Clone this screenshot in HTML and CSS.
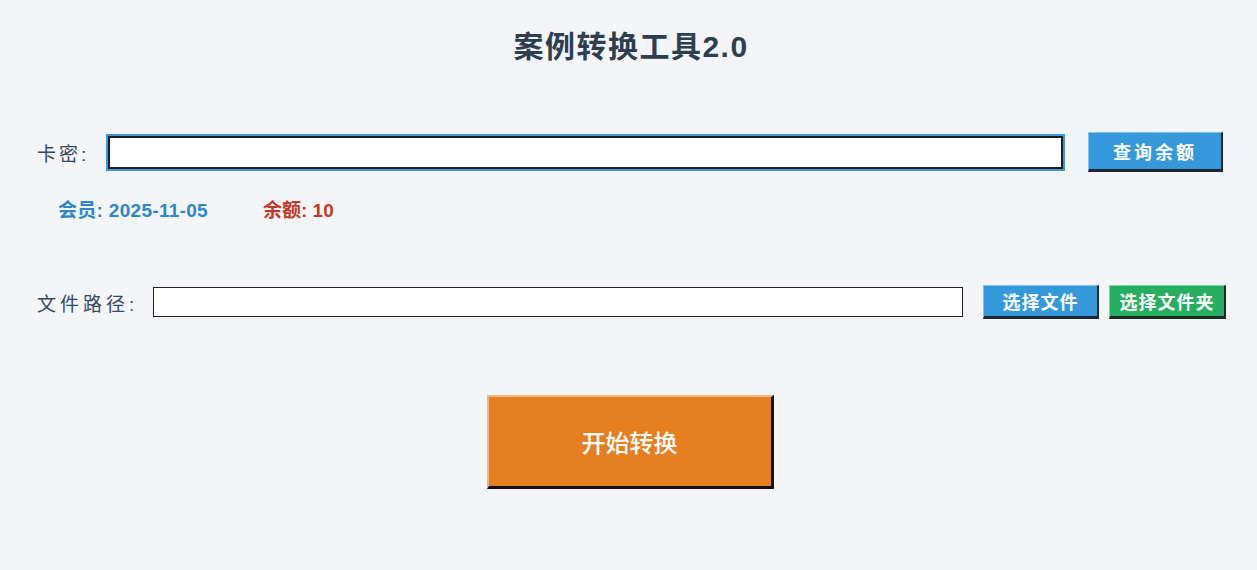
FILE: index.html
```html
<!DOCTYPE html>
<html lang="zh-CN">
<head>
<meta charset="utf-8">
<title>案例转换工具2.0</title>
<link rel="stylesheet" href="styles.css">
</head>
<body>
<div class="app">
  <h1 class="title">案例转换工具2.0</h1>

  <div class="row row-key">
    <label class="label label-key">卡密:</label>
    <div class="entry entry-focus"></div>
    <button class="btn btn-blue btn-query">查询余额</button>
  </div>

  <div class="info">
    <span class="info-member">会员: 2025-11-05</span>
    <span class="info-balance">余额: 10</span>
  </div>

  <div class="row row-path">
    <label class="label label-path">文件路径:</label>
    <div class="entry entry-path"></div>
    <div class="btn-group">
      <button class="btn btn-blue btn-file">选择文件</button>
      <button class="btn btn-green btn-folder">选择文件夹</button>
    </div>
  </div>

  <div class="start-wrap">
    <button class="btn-start">开始转换</button>
  </div>
</div>
</body>
</html>
```

FILE: styles.css
```css
html, body {
  margin: 0;
  padding: 0;
  background: #f4f5f9;
}

body {
  font-family: "Liberation Sans", "Noto Sans CJK SC", sans-serif;
  color: #2c3e50;
  width: 1257px;
  height: 570px;
  overflow: hidden;
}

.app {
  display: flex;
  flex-direction: column;
}

.title {
  margin: 27px 0 0 0;
  padding-left: 5px;
  text-align: center;
  font-size: 30px;
  line-height: 40px;
  font-weight: 700;
  color: #2c3e50;
  letter-spacing: 1.5px;
}

.row {
  display: flex;
  align-items: center;
}

.row-key {
  margin-top: 65px;
  height: 40px;
  padding: 0 34px 0 37px;
}

.label {
  font-size: 19px;
  color: #34495e;
  white-space: nowrap;
}

.label-key {
  width: 69px;
  letter-spacing: 3px;
}

.label-path {
  width: 116px;
  letter-spacing: 4px;
}

.entry {
  flex: 1;
  background: #ffffff;
  box-sizing: border-box;
}

.entry-focus {
  height: 33px;
  border: 2px solid #1e1e1e;
  box-shadow: 0 0 0 2px #3a9ad9;
  margin: 0 25px 0 2px;
}

.btn {
  font-family: "Liberation Sans", "Noto Sans CJK SC", sans-serif;
  font-weight: 700;
  color: #ffffff;
  padding: 0;
  box-sizing: border-box;
  cursor: pointer;
  letter-spacing: 1px;
}

.btn-blue {
  background: #3498db;
  border-top: 1px solid #7fc0ec;
  border-left: 1px solid #7fc0ec;
  border-right: 2px solid #1c2733;
  border-bottom: 3px solid #1c2733;
}

.btn-green {
  background: #27ae60;
  border-top: 1px solid #7ed6a2;
  border-left: 1px solid #7ed6a2;
  border-right: 2px solid #1c2b22;
  border-bottom: 3px solid #1c2b22;
}

.btn-query {
  width: 135px;
  height: 40px;
  font-size: 18px;
  letter-spacing: 3px;
}

.info {
  display: flex;
  margin-top: 27px;
  padding-left: 58px;
  font-size: 19px;
  font-weight: 700;
  line-height: 24px;
}

.info-member {
  color: #2e86c8;
  width: 205px;
  letter-spacing: 0.3px;
}

.info-balance {
  color: #c0392b;
}

.row-path {
  margin-top: 62px;
  height: 34px;
  padding: 0 31px 0 37px;
}

.entry-path {
  height: 30px;
  border: 1px solid #1e1e1e;
  margin-right: 20px;
}

.btn-group {
  display: flex;
  gap: 10px;
}

.btn-file {
  width: 116px;
  height: 34px;
  font-size: 18px;
}

.btn-folder {
  width: 117px;
  height: 34px;
  font-size: 18px;
}

.start-wrap {
  display: flex;
  justify-content: center;
  margin-top: 76px;
  padding-left: 3px;
}

.btn-start {
  width: 287px;
  height: 94px;
  background: #e67e22;
  color: #ffffff;
  font-family: "Liberation Sans", "Noto Sans CJK SC", sans-serif;
  font-size: 24px;
  font-weight: 500;
  box-sizing: border-box;
  border-top: 2px solid #f5b583;
  border-left: 2px solid #f5b583;
  border-right: 3px solid #111111;
  border-bottom: 3px solid #111111;
  padding: 0;
  cursor: pointer;
}
```
